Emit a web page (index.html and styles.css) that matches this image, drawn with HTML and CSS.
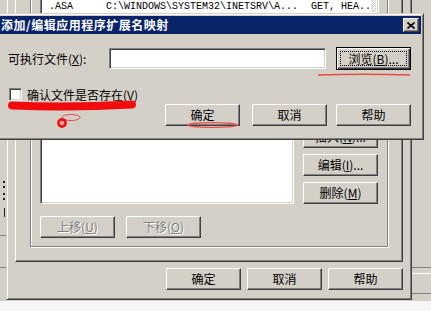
FILE: index.html
```html
<!DOCTYPE html>
<html lang="zh-CN">
<head>
  <meta charset="UTF-8">
  <title>添加/编辑应用程序扩展名映射</title>
  <link rel="stylesheet" href="styles.css">
</head>
<body>
  <div class="desk">
    <!-- 后面窗口的残边 -->
    <div class="scraps-left">
      <div class="dot d1"></div>
      <div class="dot d2"></div>
      <div class="dot d3"></div>
      <div class="dot d4"></div>
      <div class="bar"></div>
      <div class="hline h1"></div>
      <div class="hline h2"></div>
    </div>
    <div class="scraps-right">
      <div class="rline r1"></div>
      <div class="rline r2"></div>
      <div class="rline r3"></div>
    </div>

    <!-- 应用程序配置（后面的属性页） -->
    <div class="sheet">
      <div class="tabpage">
        <div class="group">
          <div class="list ext-list">
            <div class="rows">
              <div class="row">
                <span class="c-ext">.ASA</span>
                <span class="c-path">C:\WINDOWS\SYSTEM32\INETSRV\A...</span>
                <span class="c-verb">GET, HEA..</span>
              </div>
            </div>
            <div class="track"></div>
          </div>
          <div class="wild-row">
            <div class="list wild-list"></div>
            <div class="side-btns">
              <button class="btn">插入(<u>N</u>)...</button>
              <button class="btn">编辑(<u>I</u>)...</button>
              <button class="btn">删除(<u>M</u>)</button>
            </div>
          </div>
          <div class="move-btns">
            <button class="btn off">上移(<u>U</u>)</button>
            <button class="btn off">下移(<u>O</u>)</button>
          </div>
        </div>
      </div>
      <div class="sheet-btns">
        <button class="btn">确定</button>
        <button class="btn">取消</button>
        <button class="btn">帮助</button>
      </div>
    </div>

    <!-- 添加/编辑 对话框 -->
    <div class="dialog">
      <div class="titlebar">
        <span class="title">添加/编辑应用程序扩展名映射</span>
        <span class="close">
          <svg width="8" height="7" viewBox="0 0 8 7"><path d="M0.5 0.5 L7.5 6.5 M7.5 0.5 L0.5 6.5" stroke="#000" stroke-width="1.6" fill="none"/></svg>
        </span>
      </div>
      <div class="dlg-body">
        <div class="file-row">
          <label class="file-label" for="exe">可执行文件(<u>X</u>):</label>
          <input class="field" id="exe" type="text">
          <button class="btn focus"><span class="focus-ring">浏览(<u>B</u>)...</span></button>
        </div>
        <div class="check-row">
          <span class="checkbox"></span>
          <span>确认文件是否存在(<u>V</u>)</span>
        </div>
        <div class="dlg-btns">
          <button class="btn ok">确定</button>
          <button class="btn cancel">取消</button>
          <button class="btn help">帮助</button>
        </div>
      </div>
    </div>

    <!-- 红笔标注 -->
    <svg class="marks" width="431" height="311" viewBox="0 0 431 311">
      <path d="M318 75 Q364 73.5 410 75" stroke="#e84a44" stroke-width="1.6" fill="none"/>
      <path d="M12 105.5 Q70 108 132 104.5" stroke="#f00c0c" stroke-width="8" stroke-linecap="round" fill="none"/>
      <ellipse cx="71" cy="117.5" rx="9" ry="3" stroke="#e24848" stroke-width="1" fill="none"/>
      <circle cx="62" cy="123" r="3.6" stroke="#f01010" stroke-width="2.6" fill="#f6a0a0"/>
      <ellipse cx="212.5" cy="125" rx="25" ry="2.3" stroke="#ea5050" stroke-width="1.3" fill="none"/>
    </svg>
  </div>
</body>
</html>
```

FILE: styles.css
```css
* {
  box-sizing: border-box;
}
body {
  margin: 0;
  width: 431px;
  height: 311px;
  overflow: hidden;
  background: #f6f6f6;
  font-family: "Noto Sans CJK SC", sans-serif;
  font-size: 12px;
  color: #000;
}
.desk {
  position: relative;
  width: 431px;
  height: 301px;
  background: #d4d0c8;
  overflow: hidden;
}
button {
  font: inherit;
  color: inherit;
  margin: 0;
}
u {
  text-decoration: underline;
  text-underline-offset: 1px;
}

/* classic button */
.btn {
  display: block;
  width: 75px;
  height: 22px;
  padding: 0;
  background: #d4d0c8;
  border: 1px solid;
  border-color: #fff #404040 #404040 #fff;
  box-shadow: inset -1px -1px #808080;
  line-height: 18px;
  text-align: center;
}
.btn.off {
  color: #808080;
  text-shadow: 1px 1px #fff;
}
.btn.focus {
  border-color: #000;
  box-shadow: inset 1px 1px #fff, inset -1px -1px #404040, inset -2px -2px #808080;
  height: 23px;
  padding: 3px;
}
.focus-ring {
  display: block;
  height: 15px;
  line-height: 14px;
  border: 1px dotted #000;
}

/* scraps of windows further behind */
.scraps-left {
  position: absolute;
  left: 0;
  top: 140px;
  width: 6px;
  height: 160px;
}
.dot {
  position: absolute;
  left: 3px;
  width: 2px;
  height: 2px;
  background: #222;
}
.d1 { top: 41px; }
.d2 { top: 46px; }
.d3 { top: 53px; }
.d4 { top: 58px; }
.bar {
  position: absolute;
  left: 4px;
  top: 68px;
  width: 1px;
  height: 9px;
  background: #222;
}
.hline {
  position: absolute;
  left: 0;
  width: 6px;
  height: 1px;
  background: #808080;
}
.h1 { top: 95px; }
.h2 { top: 127px; }
.scraps-right {
  position: absolute;
  left: 412px;
  top: 0;
  width: 19px;
  height: 301px;
}
.rline {
  position: absolute;
  left: 0;
  width: 19px;
  height: 1px;
}
.r1 { top: 267px; background: #808080; }
.r2 { top: 273px; background: #fff; }
.r3 { top: 293px; background: #808080; }

/* property sheet */
.sheet {
  position: absolute;
  left: 6px;
  top: -60px;
  width: 406px;
  height: 360px;
  padding: 0 8px 9px 8px;
  border: 1px solid;
  border-color: #d4d0c8 #404040 #404040 #d4d0c8;
  box-shadow: inset 1px 1px #fff, inset -1px -1px #808080;
}
.tabpage {
  height: 321px;
  padding: 0 14px 14px 14px;
  border: 1px solid;
  border-color: #fff #404040 #404040 #fff;
  box-shadow: inset -1px -1px #808080;
}
.group {
  height: 305px;
  padding: 0 9px 8px 9px;
  border: 1px solid #808080;
  box-shadow: inset 1px 1px #fff, 1px 1px #fff;
}
.list {
  background: #fff;
  border: 1px solid;
  border-color: #808080 #fff #fff #808080;
  box-shadow: inset 1px 1px #404040, inset -1px -1px #d4d0c8;
}
.ext-list {
  height: 72px;
  margin-right: -1px;
  display: flex;
  padding: 2px;
}
.rows {
  flex: 1;
  padding-top: 54px;
}
.row {
  display: flex;
  height: 14px;
  line-height: 14px;
  padding-left: 6px;
  font-family: "Liberation Mono", monospace;
  font-size: 10px;
  white-space: nowrap;
}
.c-ext { width: 57px; }
.c-path { width: 205px; }
.track {
  width: 13px;
  background: repeating-conic-gradient(#fff 0 25%, #d4d0c8 0 50%) 0 0 / 2px 2px;
}
.wild-row {
  display: flex;
  align-items: flex-end;
  height: 84px;
  margin-top: 105px;
}
.wild-list {
  width: 254px;
  height: 84px;
}
.side-btns {
  display: flex;
  flex-direction: column;
  gap: 6px;
  margin-left: 9px;
}
.move-btns {
  display: flex;
  gap: 11px;
  margin-top: 12px;
}
.sheet-btns {
  display: flex;
  justify-content: flex-end;
  gap: 6px;
  margin-top: 6px;
}

/* dialog */
.dialog {
  position: absolute;
  left: -12px;
  top: 13px;
  width: 436px;
  height: 127px;
  display: flex;
  flex-direction: column;
  padding: 2px;
  background: #d4d0c8;
  border: 1px solid;
  border-color: #d4d0c8 #404040 #404040 #d4d0c8;
  box-shadow: inset 1px 1px #fff, inset -1px -1px #808080;
}
.titlebar {
  height: 18px;
  display: flex;
  align-items: center;
  padding: 0 2px 0 10px;
  background: #0a246a;
  color: #fff;
  font-weight: bold;
}
.title {
  letter-spacing: 0.5px;
  line-height: 18px;
}
.close {
  margin-left: auto;
  width: 16px;
  height: 14px;
  display: flex;
  align-items: center;
  justify-content: center;
  background: #d4d0c8;
  border: 1px solid;
  border-color: #fff #404040 #404040 #fff;
  box-shadow: inset -1px -1px #808080;
}
.dlg-body {
  flex: 1;
  display: flex;
  flex-direction: column;
  padding: 13px 10px 11px 17px;
}
.file-row {
  display: flex;
  align-items: center;
  height: 23px;
}
.file-label {
  width: 101px;
}
.field {
  width: 217px;
  height: 21px;
  margin: 0 10px 0 0;
  background: #fff;
  border: 1px solid;
  border-color: #808080 #fff #fff #808080;
  box-shadow: inset 1px 1px #404040, inset -1px -1px #d4d0c8;
}
.check-row {
  display: flex;
  align-items: center;
  height: 15px;
  margin-top: 17px;
}
.checkbox {
  width: 13px;
  height: 13px;
  margin: 0 5px 0 1px;
  background: #fff;
  border: 1px solid;
  border-color: #808080 #fff #fff #808080;
  box-shadow: inset 1px 1px #404040, inset -1px -1px #d4d0c8;
}
.dlg-btns {
  display: flex;
  justify-content: flex-end;
  margin-top: 2px;
}
.dlg-btns .cancel { margin-left: 12px; }
.dlg-btns .help { margin-left: 9px; }

.marks {
  position: absolute;
  left: 0;
  top: 0;
  pointer-events: none;
}
```
